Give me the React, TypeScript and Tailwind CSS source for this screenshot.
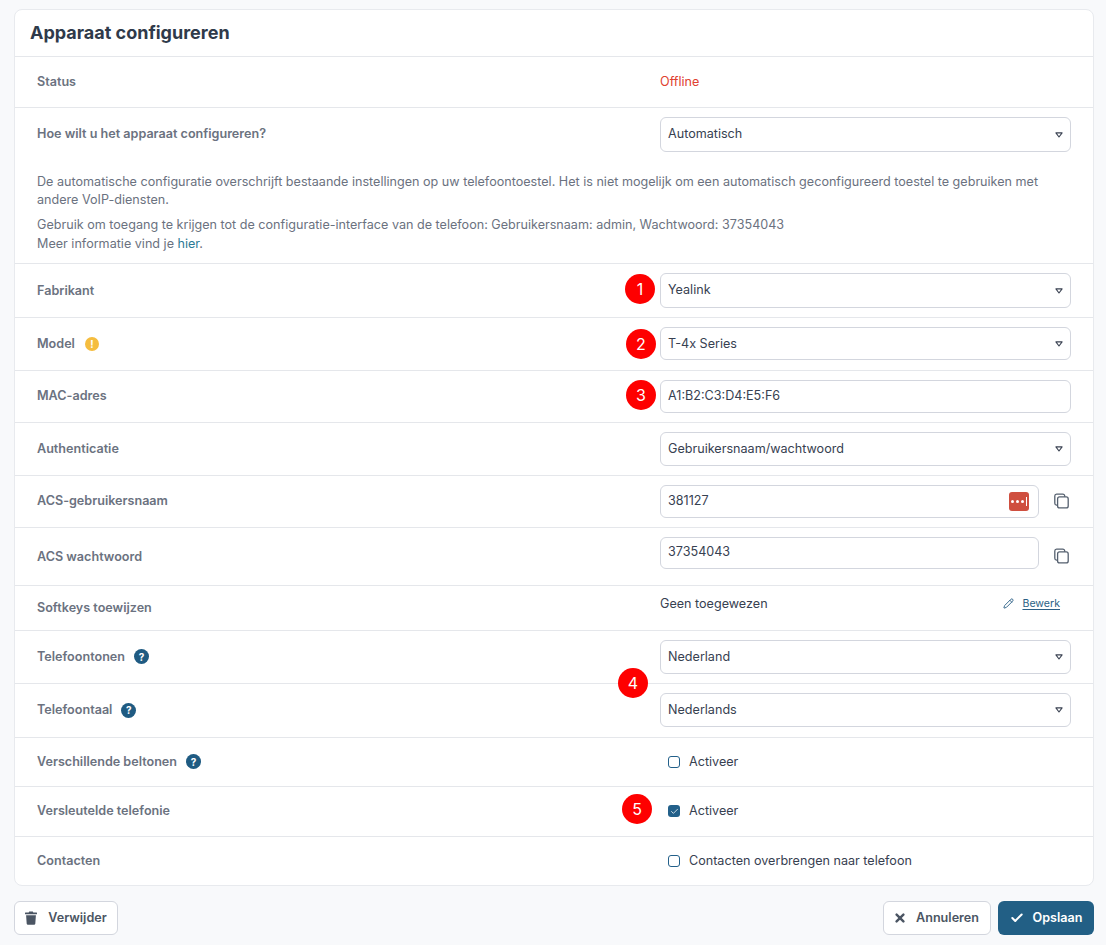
import { Check, Pencil } from "lucide-react";
import type { ReactNode } from "react";

function Caret() {
  return (
    <svg width="8" height="6" viewBox="0 0 8 6" className="shrink-0">
      <path d="M.9.9h6.2L4 5z" fill="none" stroke="#3a4252" strokeWidth="1.1" strokeLinejoin="round" />
    </svg>
  );
}

function CopyIcon() {
  return (
    <svg width="15" height="16" viewBox="0 0 15 16" fill="none" stroke="#55606f" strokeWidth="1.3" className="mb-[2px] ml-[15px] shrink-0">
      <path d="M3.4 12.2H2.6A1.9 1.9 0 0 1 .8 10.3V3A1.9 1.9 0 0 1 2.6 1.1h6.2A1.9 1.9 0 0 1 10.7 3v.7" />
      <rect x="3.6" y="3.9" width="10.6" height="11" rx="2" />
    </svg>
  );
}

function TrashIcon() {
  return (
    <svg width="12" height="14" viewBox="0 0 12 14" fill="#4b5563" className="shrink-0">
      <path d="M4.2.4h3.6l.5 1.1H11.4a.6.6 0 0 1 0 1.7H.6a.6.6 0 0 1 0-1.7h3.1z" />
      <path d="M1.1 4.2h9.8l-.6 8.5a1.2 1.2 0 0 1-1.2 1H2.9a1.2 1.2 0 0 1-1.2-1z" />
    </svg>
  );
}

function CrossIcon() {
  return (
    <svg width="10" height="10" viewBox="0 0 10 10" className="shrink-0">
      <path d="M1.6 1.6l6.8 6.8M8.4 1.6L1.6 8.4" stroke="#4b5563" strokeWidth="2.4" strokeLinecap="round" />
    </svg>
  );
}

function Select({ value, height = "h-[35px]" }: { value: string; height?: string }) {
  return (
    <div className={`flex w-[411px] items-center justify-between rounded-md border border-[#d3d6de] bg-white pl-[7px] pr-[7px] text-[12.6px] text-[#374151] ${height}`}>
      <span>{value}</span>
      <Caret />
    </div>
  );
}

function Field({ value, height = "h-[32px]", width = "w-[411px]", children }: { value: string; height?: string; width?: string; children?: ReactNode }) {
  return (
    <div className={`flex items-center justify-between rounded-md border border-[#d3d6de] bg-white pl-[7px] pr-[10px] text-[12.6px] text-[#374151] ${height} ${width}`}>
      <span>{value}</span>
      {children}
    </div>
  );
}

function Help() {
  return (
    <span className="flex h-[15px] w-[15px] items-center justify-center rounded-full bg-[#1f5b82] text-[10px] font-bold leading-none text-white">?</span>
  );
}

function Box({ checked = false }: { checked?: boolean }) {
  if (checked) {
    return (
      <span className="flex h-[12px] w-[12px] items-center justify-center rounded-[3px] bg-[#23608a]">
        <Check size={9} color="white" strokeWidth={2} />
      </span>
    );
  }
  return <span className="h-[12px] w-[12px] rounded-[3px] border border-[#23608a] bg-white" />;
}

function Row({ label, extra, height, children, last = false }: { label: string; extra?: ReactNode; height: string; children?: ReactNode; last?: boolean }) {
  return (
    <div className={`flex items-center pl-[22px] ${height} ${last ? "" : "border-b border-[#e5e7eb]"}`}>
      <div className="flex w-[623px] shrink-0 items-center gap-[9px] text-[12.6px] font-semibold text-[#6b7280]">
        <span>{label}</span>
        {extra}
      </div>
      {children}
    </div>
  );
}

function Marker({ n, className }: { n: number; className: string }) {
  return (
    <span className={`absolute flex h-[30px] w-[30px] items-center justify-center rounded-full bg-[#fe0000] text-[16px] text-white ${className}`}>
      {n}
    </span>
  );
}

function SecretIcon() {
  return (
    <span className="-mr-px flex h-[19px] w-[20px] items-center justify-center gap-[2px] rounded-[3px] bg-[#cf4f3f]">
      <span className="h-[3px] w-[3px] rounded-full bg-white" />
      <span className="h-[3px] w-[3px] rounded-full bg-white" />
      <span className="h-[3px] w-[3px] rounded-full bg-white" />
      <span className="h-[9px] w-px bg-white" />
    </span>
  );
}

export default function App() {
  return (
    <div className="h-[945px] w-[1106px] overflow-hidden bg-[#f8f9fb] px-[14px] pt-[9px] font-['Inter',sans-serif]">
      <div className="relative w-[1080px] rounded-lg border border-[#e8eaee] bg-white">
        <div className="flex h-[47px] items-center border-b border-[#e5e7eb] pb-[2px] pl-[15px] text-[18px] font-bold text-[#2f3a4a]">
          Apparaat configureren
        </div>

        <Row label="Status" height="h-[51px]">
          <span className="text-[12.6px] text-[#e0412f]">Offline</span>
        </Row>

        <div className="h-[156px] border-b border-[#e5e7eb] pl-[22px] pt-[9px]">
          <div className="flex items-center">
            <div className="w-[623px] shrink-0 text-[12.6px] font-semibold text-[#6b7280]">Hoe wilt u het apparaat configureren?</div>
            <Select value="Automatisch" />
          </div>
          <div className="mt-[21px] w-[1010px] text-[12.6px] leading-[18px] text-[#6b7280]">
            <p>De automatische configuratie overschrijft bestaande instellingen op uw telefoontoestel. Het is niet mogelijk om een automatisch geconfigureerd toestel te gebruiken met andere VoIP-diensten.</p>
            <p className="mt-[7px]">Gebruik om toegang te krijgen tot de configuratie-interface van de telefoon: Gebruikersnaam: admin, Wachtwoord: 37354043</p>
            <p className="mt-px">Meer informatie vind je <span className="text-[#2c7a96]">hier</span>.</p>
          </div>
        </div>

        <Row label="Fabrikant" height="h-[54px] pt-px">
          <div className="mb-[2px]"><Select value="Yealink" height="h-[35px] pt-px" /></div>
        </Row>
        <Row label="Model" height="h-[53px]" extra={
          <span className="ml-px flex h-[14px] w-[14px] items-center justify-center rounded-full bg-[#f5bd3f] text-[10px] font-bold leading-none text-white">!</span>
        }>
          <div className="mb-[2px]"><Select value="T-4x Series" height="h-[33px] pt-[2px]" /></div>
        </Row>
        <Row label="MAC-adres" height="h-[52px]"><Field value="A1:B2:C3:D4:E5:F6" height="h-[33px]" /></Row>
        <Row label="Authenticatie" height="h-[53px]"><Select value="Gebruikersnaam/wachtwoord" height="h-[34px]" /></Row>
        <Row label="ACS-gebruikersnaam" height="h-[52px]">
          <Field value="381127" width="w-[379px]" height="h-[33px]"><SecretIcon /></Field>
          <CopyIcon />
        </Row>
        <Row label="ACS wachtwoord" height="h-[58px] pt-px">
          <div className="mb-[9px]"><Field value="37354043" width="w-[379px]" /></div>
          <CopyIcon />
        </Row>
        <Row label="Softkeys toewijzen" height="h-[45px]">
          <div className="flex w-[411px] items-center justify-between pb-[8px]">
            <span className="text-[12.6px] text-[#374151]">Geen toegewezen</span>
            <span className="mr-[11px] flex items-center gap-[8px] text-[10.6px] text-[#2b5f85]">
              <Pencil size={11} strokeWidth={2} />
              <span className="underline underline-offset-2">Bewerk</span>
            </span>
          </div>
        </Row>
        <Row label="Telefoontonen" height="h-[53px]" extra={<Help />}><Select value="Nederland" height="h-[34px]" /></Row>
        <Row label="Telefoontaal" height="h-[54px]" extra={<Help />}>
          <div className="mb-[2px]"><Select value="Nederlands" height="h-[34px] pt-px" /></div>
        </Row>
        <Row label="Verschillende beltonen" height="h-[49px]" extra={<Help />}>
          <div className="flex items-center gap-[9px] pl-2 text-[12.6px] text-[#374151]"><Box /><span>Activeer</span></div>
        </Row>
        <Row label="Versleutelde telefonie" height="h-[50px]">
          <div className="flex items-center gap-[9px] pl-2 text-[12.6px] text-[#374151]"><Box checked /><span>Activeer</span></div>
        </Row>
        <Row label="Contacten" height="h-[48px]" last>
          <div className="flex items-center gap-[9px] pl-2 text-[12.6px] text-[#374151]"><Box /><span>Contacten overbrengen naar telefoon</span></div>
        </Row>

        <Marker n={1} className="left-[610px] top-[264px]" />
        <Marker n={2} className="left-[611px] top-[319px]" />
        <Marker n={3} className="left-[611px] top-[370px]" />
        <Marker n={4} className="left-[603px] top-[658px]" />
        <Marker n={5} className="left-[607px] top-[784px]" />
      </div>

      <div className="mt-[15px] flex w-[1080px] items-center justify-between">
        <button className="flex h-[34px] w-[104px] items-center justify-center gap-[11px] rounded-md border border-[#d3d6de] bg-white text-[12.6px] font-semibold text-[#4b5563]">
          <TrashIcon />
          Verwijder
        </button>
        <div className="flex gap-[7px]">
          <button className="flex h-[34px] w-[108px] items-center justify-center gap-[11px] rounded-md border border-[#d3d6de] bg-white text-[12.6px] font-semibold text-[#4b5563]">
            <CrossIcon />
            Annuleren
          </button>
          <button className="flex h-[34px] w-[96px] items-center justify-center gap-[9px] rounded-md bg-[#225f85] text-[12.6px] font-semibold text-white">
            <Check size={14} color="white" strokeWidth={3.5} />
            Opslaan
          </button>
        </div>
      </div>
    </div>
  );
}
